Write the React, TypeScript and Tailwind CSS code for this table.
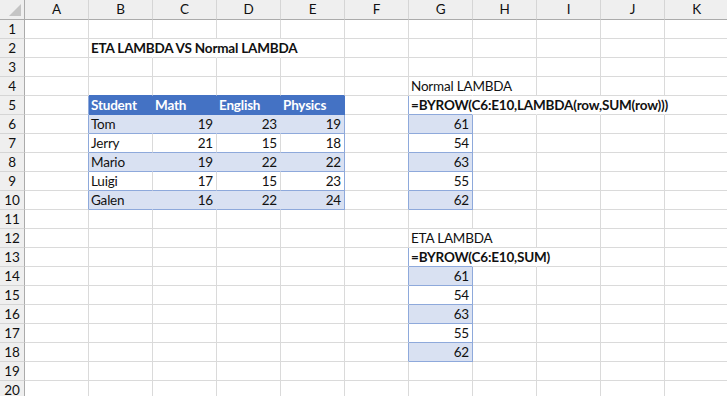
import React from 'react';

const cols = ['A', 'B', 'C', 'D', 'E', 'F', 'G', 'H', 'I', 'J', 'K'];
const rows = Array.from({ length: 20 }, (_, i) => i + 1);

type Cell = { v: string; b?: boolean; num?: boolean; white?: boolean };

const data: Record<string, Cell> = {
  B2: { v: 'ETA LAMBDA VS Normal LAMBDA', b: true },
  B5: { v: 'Student', b: true, white: true },
  C5: { v: 'Math', b: true, white: true },
  D5: { v: 'English', b: true, white: true },
  E5: { v: 'Physics', b: true, white: true },
  G4: { v: 'Normal LAMBDA' },
  G5: { v: '=BYROW(C6:E10,LAMBDA(row,SUM(row)))', b: true },
  G12: { v: 'ETA LAMBDA' },
  G13: { v: '=BYROW(C6:E10,SUM)', b: true },
};

const students = [
  ['Tom', '19', '23', '19', '61'],
  ['Jerry', '21', '15', '18', '54'],
  ['Mario', '19', '22', '22', '63'],
  ['Luigi', '17', '15', '23', '55'],
  ['Galen', '16', '22', '24', '62'],
];
students.forEach((s, i) => {
  const r = 6 + i;
  data['B' + r] = { v: s[0] };
  data['C' + r] = { v: s[1], num: true };
  data['D' + r] = { v: s[2], num: true };
  data['E' + r] = { v: s[3], num: true };
  data['G' + r] = { v: s[4], num: true };
  data['G' + (r + 8)] = { v: s[4], num: true };
});

// cells whose text runs into the next one, so Excel hides the gridline
const spill = ['B2', 'C2', 'D2', 'G4', 'G5', 'H5', 'I5', 'J5', 'G12', 'G13', 'H13'];

const inTable = (c: string, r: number) => 'BCDE'.includes(c) && r >= 5 && r <= 10;
const inSpill = (c: string, r: number) =>
  c === 'G' && ((r >= 6 && r <= 10) || (r >= 14 && r <= 18));
const banded = (r: number) => r % 2 === 0;

const cellClass = (c: string, r: number) => {
  const key = c + r;
  let bg = '';
  if (inTable(c, r)) bg = r === 5 ? 'bg-[#4472C4]' : banded(r) ? 'bg-[#D9E1F2]' : '';
  if (inSpill(c, r) && banded(r)) bg = 'bg-[#D9E1F2]';

  let br = 'border-r-[#DADADA]';
  if (spill.includes(key)) br = 'border-r-transparent';
  else if (inTable(c, r)) {
    if (c === 'E') br = r === 5 ? 'border-r-[#4472C4]' : 'border-r-[#8EA9DB]';
    else if (r === 5) br = 'border-r-[#4472C4]';
    else if (banded(r)) br = 'border-r-[#D9E1F2]';
  } else if (c === 'A' && r >= 5 && r <= 10) br = 'border-r-[#8EA9DB]';
  else if (inSpill(c, r)) br = 'border-r-[#8EA9DB]';
  else if (c === 'F' && ((r >= 5 && r <= 10) || (r >= 13 && r <= 18))) br = 'border-r-[#8EA9DB]';

  let bb = 'border-b-[#DADADA]';
  if ('BCDE'.includes(c) && (r === 4 || r === 5)) bb = 'border-b-[#4472C4]';
  else if (inTable(c, r)) bb = 'border-b-[#8EA9DB]';
  else if (c === 'G' && ((r >= 5 && r <= 10) || (r >= 13 && r <= 18))) bb = 'border-b-[#8EA9DB]';

  return `${bg} ${br} ${bb}`;
};

const App = () => {
  return (
    <div
      className="w-[727px] h-[396px] overflow-hidden bg-white text-[13.5px] tracking-[-0.2px] text-[#111]"
      style={{ fontFamily: 'Lato, "Liberation Sans", sans-serif' }}
    >
      {/* column headers */}
      <div className="flex h-[20px]">
        <div className="relative w-[25px] shrink-0 bg-[#EFEFEF] border-r border-b border-r-[#ABABAB] border-b-[#ABABAB]">
          <svg className="absolute left-[9px] top-[4px]" width="13" height="13" viewBox="0 0 13 13">
            <polygon points="12,0 12,12 0,12" fill="#C4C4C4" />
          </svg>
        </div>
        {cols.map((c) => (
          <div
            key={c}
            className="w-[64px] shrink-0 bg-[#EFEFEF] border-r border-b border-r-[#D5D5D5] border-b-[#ABABAB] flex items-center justify-center leading-none pt-[1px]"
          >
            {c}
          </div>
        ))}
      </div>

      {rows.map((r) => (
        <div key={r} className="flex h-[19px]">
          <div className="w-[25px] shrink-0 bg-[#EFEFEF] border-r border-b border-r-[#ABABAB] border-b-[#D5D5D5] flex items-center justify-center leading-none pt-[1px]">
            {r}
          </div>
          {cols.map((c) => {
            const cell = data[c + r];
            return (
              <div
                key={c}
                className={`relative w-[64px] shrink-0 border-r border-b flex items-center leading-none pt-[1px] ${cellClass(c, r)}`}
              >
                {cell && (
                  <span
                    className={`whitespace-nowrap ${cell.b ? 'font-bold' : ''} ${
                      cell.white ? 'text-white' : ''
                    } ${cell.num ? 'ml-auto pr-[3px]' : 'pl-[2px]'}`}
                  >
                    {cell.v}
                  </span>
                )}
              </div>
            );
          })}
        </div>
      ))}
    </div>
  );
};

export default App;
